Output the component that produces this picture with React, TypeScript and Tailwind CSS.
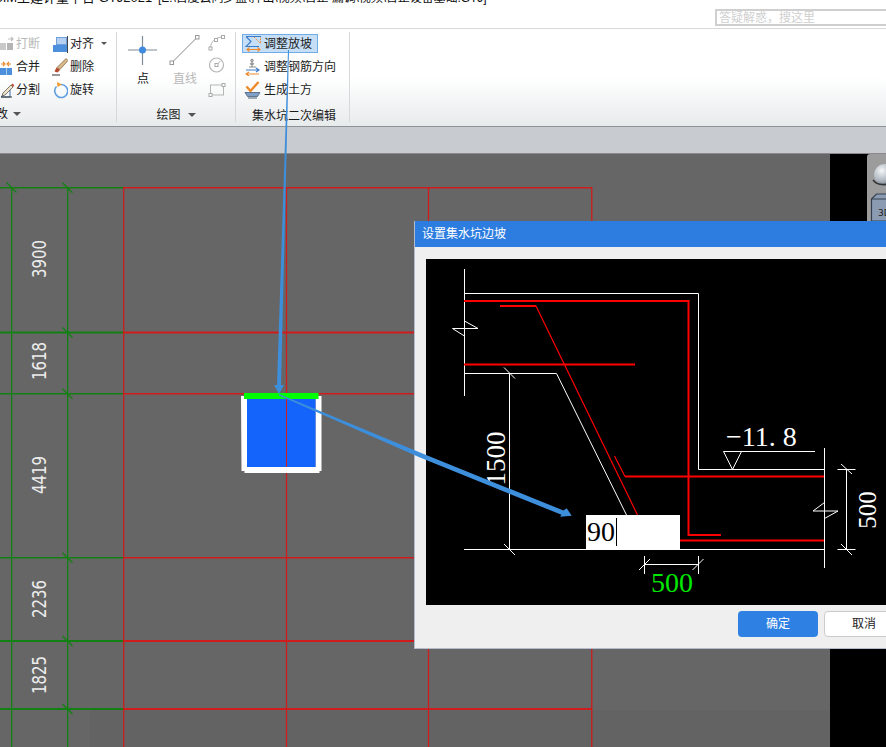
import type { ReactNode } from "react"

// ---- ribbon icons ----
function Icon({ children, w = 16 }: { children: ReactNode; w?: number }) {
  return (
    <svg width={w} height="18" viewBox={`0 0 ${w} 18`} className="shrink-0">
      {children}
    </svg>
  )
}

const BreakIcon = (
  <Icon>
    <rect x="2" y="8" width="6" height="7" fill="#c9c9c9" />
    <rect x="9" y="8" width="6" height="7" fill="#b5b5b5" />
    <path d="M10 4h5M13 2l2 2-2 2" stroke="#bdbdbd" strokeWidth="1.2" fill="none" />
  </Icon>
)
const AlignIcon = (
  <Icon>
    <rect x="4.500" y="2.500" width="10" height="7" fill="#b5d0f0" stroke="#6f9fd8" />
    <rect x="1" y="10" width="14" height="7" fill="#4c8fdd" />
    <path d="M15.500 1v17" stroke="#444" />
  </Icon>
)
const MergeIcon = (
  <Icon>
    <rect x="2" y="10" width="6" height="7" fill="#4c8fdd" />
    <rect x="8.500" y="10" width="5.500" height="7" fill="#4c8fdd" />
    <path d="M3 6h3M5 4l2 2-2 2M13 6h-3M11 4l-2 2 2 2" stroke="#e8892c" strokeWidth="1.2" fill="none" />
  </Icon>
)
const EraseIcon = (
  <Icon>
    <path d="M14 0.500l2 2-8 9-3-2z" fill="#d9b88a" stroke="#7a5a3a" strokeWidth=".7" />
    <path d="M4.500 9.500l3.500 2.500-2.500 2.500-3-1z" fill="#b5482a" />
    <path d="M0 17h8" stroke="#333" />
  </Icon>
)
const SplitIcon = (
  <Icon>
    <path d="M3 16l9-8v8z" fill="none" stroke="#3c6ea8" />
    <path d="M3 16h11" stroke="#333" />
    <path d="M5 12l8-8 2 2-8 8-3 1z" fill="#efe3c8" stroke="#5a5a5a" strokeWidth=".8" />
    <path d="M13 4l1.500-1.500 2 2L15 6z" fill="#c0503a" />
  </Icon>
)
const RotateIcon = (
  <Icon>
    <path d="M9 3.500a6.500 6.500 0 1 1-4.500 2" fill="none" stroke="#5f9fe0" strokeWidth="1.600" />
    <path d="M5 1l5 2.500L5.500 6z" fill="#ef9a2c" />
  </Icon>
)
const SlopeIcon = (
  <svg width="18" height="17" viewBox="0 0 18 17" className="shrink-0">
    <path d="M1 1.500h15M1 1.500l5 5-5 5h13" fill="none" stroke="#3b7cc9" strokeWidth="1.200" />
    <path d="M9 2l6.500 6.500V2" stroke="#ef8a2c" strokeDasharray="1.500 1" fill="none" />
    <path d="M2 14.500h13M4.500 12.500l-2.500 2 2.500 2M12.500 12.500l2.500 2-2.500 2" stroke="#ef8a2c" strokeWidth="1.100" fill="none" />
  </svg>
)
const RebarIcon = (
  <Icon w={18}>
    <path d="M8 1.500v7M6 5.500a3 3 0 0 0 4 0M5 9h7" stroke="#8a8a8a" fill="none" strokeWidth="1.100" />
    <circle cx="8" cy="2.500" r="1.300" fill="none" stroke="#8a8a8a" />
    <path d="M2 12h13M12 10l3 2-3 2" stroke="#3b7cc9" strokeWidth="1.100" fill="none" />
    <path d="M15 16H2M5 14l-3 2 3 2" stroke="#ef8a2c" strokeWidth="1.100" fill="none" />
  </Icon>
)
const EarthIcon = (
  <Icon w={18}>
    <path d="M2.500 5.500l4 4.500 8-9" stroke="#ef8a2c" strokeWidth="2.400" fill="none" />
    <path d="M1 11.500h15l-2.500 4h-10z" fill="#7f9fc6" stroke="#4a5f7c" strokeWidth=".8" />
    <path d="M4 17h9" stroke="#4a5f7c" />
  </Icon>
)

function RibbonItem({ icon, label, muted, arrow }: { icon: ReactNode; label: string; muted?: boolean; arrow?: boolean }) {
  return (
    <div className="flex h-[23px] items-center gap-[2px] whitespace-nowrap">
      {icon}
      <span className={muted ? "text-[#b9b9b9]" : "text-[#1c1c1c]"}>{label}</span>
      {arrow && <span className="ml-[5px] h-0 w-0 border-x-[3px] border-t-[3px] border-x-transparent border-t-[#555]" />}
    </div>
  )
}

function Divider() {
  return <div className="mt-[3px] h-[90px] w-px shrink-0 bg-[#d6d9da]" />
}

function Ribbon() {
  return (
    <div className="flex h-[98px] shrink-0 border-b border-b-[#8e9294] bg-gradient-to-b from-white from-50% to-[#e8ebec] text-[12px]">
      {/* clipped edit group */}
      <div className="flex w-[116px] shrink-0 flex-col pt-[3px]">
        <div className="-ml-[2px] grid h-[69px] grid-cols-[54px_60px]">
          <RibbonItem icon={BreakIcon} label="打断" muted />
          <RibbonItem icon={AlignIcon} label="对齐" arrow />
          <RibbonItem icon={MergeIcon} label="合并" />
          <RibbonItem icon={EraseIcon} label="删除" />
          <RibbonItem icon={SplitIcon} label="分割" />
          <RibbonItem icon={RotateIcon} label="旋转" />
        </div>
        <div className="mt-[3px] -ml-[16px] flex h-[20px] items-center gap-[5px] whitespace-nowrap text-[#1c1c1c]">
          修改
          <span className="h-0 w-0 border-x-[4px] border-t-[4px] border-x-transparent border-t-[#555]" />
        </div>
      </div>
      <Divider />

      {/* draw group */}
      <div className="flex w-[118px] shrink-0 flex-col pt-[3px]">
        <svg width="118" height="69" viewBox="117 32 118 69" className="block">
          <path d="M128 50h29M142.500 36v29" stroke="#7f8a94" strokeWidth="1.200" />
          <circle cx="142.500" cy="50" r="3.500" fill="#3f8be0" />
          <path d="M172 62.500L197 37.500" stroke="#8a8a8a" />
          <rect x="170" y="61" width="3.500" height="3.500" fill="#fff" stroke="#999" />
          <rect x="195.500" y="35.500" width="3.500" height="3.500" fill="#fff" stroke="#999" />
          <path d="M210.500 48c0-6 5-11 12-11" stroke="#b5b5b5" fill="none" />
          <rect x="209" y="47" width="3" height="3" fill="#fff" stroke="#aaa" />
          <rect x="214.500" y="38.500" width="3" height="3" fill="#fff" stroke="#aaa" />
          <rect x="221.500" y="35.500" width="3" height="3" fill="#fff" stroke="#aaa" />
          <circle cx="216.500" cy="65" r="7" fill="none" stroke="#b5b5b5" strokeWidth="1.200" />
          <path d="M216.500 65l4-4" stroke="#b5b5b5" />
          <rect x="215" y="63.500" width="3" height="3" fill="#fff" stroke="#aaa" />
          <rect x="210.500" y="85" width="13" height="10" fill="none" stroke="#b5b5b5" />
          <rect x="209" y="93.500" width="3" height="3" fill="#fff" stroke="#aaa" />
          <rect x="222" y="83.500" width="3" height="3" fill="#fff" stroke="#aaa" />
          <text x="143" y="83" textAnchor="middle" fontSize="12" fill="#111">点</text>
          <text x="185" y="83" textAnchor="middle" fontSize="12" fill="#b9b9b9">直线</text>
        </svg>
        <div className="mt-[4px] flex h-[20px] items-center justify-center gap-[7px] whitespace-nowrap text-[#1c1c1c]">
          绘图
          <span className="h-0 w-0 border-x-[4px] border-t-[4px] border-x-transparent border-t-[#555]" />
        </div>
      </div>
      <Divider />

      {/* sump group */}
      <div className="flex w-[113px] shrink-0 flex-col pt-[5px] pr-[3px] pl-[6px]">
        <div className="flex h-[19px] w-[76px] items-center gap-[1px] border border-[#70ace8] bg-[#c7dff6] pl-[2px] whitespace-nowrap text-[#1c1c1c]">
          {SlopeIcon}
          调整放坡
        </div>
        <div className="mt-[2px] pl-[2px]">
          <RibbonItem icon={RebarIcon} label="调整钢筋方向" />
          <RibbonItem icon={EarthIcon} label="生成土方" />
        </div>
        <div className="mt-[5px] flex h-[20px] items-center justify-center whitespace-nowrap text-[#1c1c1c]">集水坑二次编辑</div>
      </div>
      <Divider />
    </div>
  )
}

// ---- main canvas (grid lines in page coordinates) ----
const RED = "#d01c1c"
const GREEN = "#128012"
const rowLines = [
  { y: 187.750, w: 1.500 },
  { y: 332.500, w: 2 },
  { y: 393.750, w: 1.500 },
  { y: 557.750, w: 1.500 },
  { y: 641, w: 2 },
  { y: 709, w: 2 },
]
const spans = [
  { t: "3900", y: 259 },
  { t: "1618", y: 361 },
  { t: "4419", y: 475 },
  { t: "2236", y: 599 },
  { t: "1825", y: 675 },
]

function Grid() {
  return (
    <svg width="830" height="593" viewBox="0 154 830 593" className="block shrink-0">
      <rect x="90" y="710" width="740" height="37" fill="#636363" />
      {rowLines.map((r) => (
        <g key={r.y}>
          <path d={`M0 ${r.y}H123`} stroke={GREEN} strokeWidth={r.w} />
          <path d={`M123 ${r.y}H592`} stroke={RED} strokeWidth={r.w} />
        </g>
      ))}
      <path d="M11.650 187V747M67.650 187V747" stroke={GREEN} strokeWidth="1.300" />
      <path d="M123.750 187V747M286.500 187V747M428.500 187V747M591.750 187V747" stroke={RED} strokeWidth="1.250" />
      {rowLines.map((r) => (
        <path key={r.y} d={`M62.500 ${r.y - 5}l10 10`} stroke={GREEN} strokeWidth="1.250" />
      ))}
      <path d="M6.500 182.500l10 10" stroke={GREEN} strokeWidth="1.250" />
      {spans.map((s) => (
        <text
          key={s.t}
          transform={`translate(46 ${s.y}) rotate(-90) scale(1 1.35)`}
          textAnchor="middle"
          fontSize="15"
          fill="#ececec"
          className="font-['DejaVu_Sans',sans-serif]"
        >
          {s.t}
        </text>
      ))}

      {/* sump pit */}
      <path d="M241 396h6v71h68.500v-71h6v75h-2v2h-75v-2h-3z" fill="#fff" />
      <rect x="247" y="399" width="68.500" height="68" fill="#1464fb" />
      <path d="M286.500 399V467" stroke={RED} />
      <rect x="244" y="393" width="74.500" height="6" fill="#00ff00" />
    </svg>
  )
}

function SidePanel() {
  return (
    <div className="h-[80px] flex-1 overflow-hidden rounded-tl-[3px] bg-[#9c9c9c]">
      <svg width="19" height="70" viewBox="867 154 19 70" className="block">
        <defs>
          <radialGradient id="ball" cx="0.35" cy="0.3" r="0.8">
            <stop offset="0" stopColor="#f4f6f8" />
            <stop offset="0.6" stopColor="#aab2bc" />
            <stop offset="1" stopColor="#5c6670" />
          </radialGradient>
        </defs>
        <circle cx="885" cy="175" r="11" fill="url(#ball)" />
        <path d="M873 180c3 4 9 5 14 4" stroke="#333" strokeWidth="1.500" fill="none" />
        <path d="M871.500 221v-22l5-5h12v27z" fill="#8b9bb2" stroke="#34404e" strokeWidth="1.200" />
        <path d="M871.500 199h16" stroke="#34404e" />
        <text x="878" y="216" fontSize="9" fill="#222" className="font-['DejaVu_Sans',sans-serif]">3D</text>
      </svg>
    </div>
  )
}

// ---- dialog drawing ----
const whiteLines = [
  "M464.500 269V396",
  "M464.500 293.500H698.500V469.500H824.500",
  "M824.500 448V568",
  "M464.500 373.500H556.500L626.500 515",
  "M464 549.500H824.500",
  "M509.500 373.500V549.500",
  "M504 367.500l11 11M504 544l11 11",
  "M464.500 336l-12-7.500h25.500l-13.500-7.500",
  "M824.500 502.500l-11.500 8.500h25l-13.500 7.500",
  "M723.500 451.500l9 18 9-18M723.500 451.500H815",
  "M846.500 469.500V549.500M837.500 469.500H855.500M837.500 549.500H855.500",
  "M841 464l11 10M841 544l11 11",
  "M644.500 556V574M698.500 556V574M644.500 564.500H698.500",
  "M639 570l11-11M692.500 570l11-11",
]
const redLines = [
  { d: "M464 301H688.500V535H721", w: 2 },
  { d: "M500 306H536", w: 2 },
  { d: "M536 306L637.500 515", w: 1.200 },
  { d: "M464 364.500H635", w: 2 },
  { d: "M614.500 456L625 476.500", w: 1.200 },
  { d: "M625 476.500H824", w: 2 },
  { d: "M680 540.500H824", w: 2 },
]

function SlopeDrawing() {
  return (
    <svg width="470" height="346" viewBox="426 259 470 346" className="block">
      <rect x="426" y="259" width="470" height="346" fill="#000" />
      {whiteLines.map((d) => (
        <path key={d} d={d} stroke="#fff" fill="none" />
      ))}
      {redLines.map((l) => (
        <path key={l.d} d={l.d} stroke="#ff0000" strokeWidth={l.w} fill="none" />
      ))}
      <g fill="#fff" className="font-['Liberation_Serif',serif]">
        <text transform="translate(505 458.500) rotate(-90)" textAnchor="middle" fontSize="27">1500</text>
        <text transform="translate(876 510) rotate(-90)" textAnchor="middle" fontSize="25">500</text>
        <text x="726" y="445.500" fontSize="28">−11. 8</text>
      </g>
      <text x="672" y="592" textAnchor="middle" fontSize="28" fill="#00e800" className="font-['Liberation_Serif',serif]">
        500
      </text>
    </svg>
  )
}

function Dialog() {
  return (
    <div className="absolute top-[221px] left-[414px] flex h-[428px] w-[490px] flex-col border-b border-l border-[#b4bccc] bg-[#efefef]">
      <div className="flex h-[26px] items-center bg-[#2d7de0] pl-[7px] text-[12px] text-white">设置集水坑边坡</div>
      <div className="relative mt-[12px] ml-[11px]">
        <SlopeDrawing />
        {/* angle input */}
        <div className="absolute top-[256px] left-[160px] flex h-[34px] w-[94px] items-center bg-white pl-[1px] font-['Liberation_Serif',serif] text-[28px] text-black">
          90
          <span className="ml-[1px] h-[28px] w-px bg-black" />
        </div>
      </div>
      <div className="mt-[6px] flex gap-[6px] pl-[323px] text-[12px]">
        <div className="flex h-[26px] w-[80px] items-center justify-center rounded-[4px] bg-[#2f80e3] text-white">确定</div>
        <div className="flex h-[26px] w-[80px] items-center justify-center rounded-[4px] border border-[#cccccc] bg-white text-[#1c1c1c]">取消</div>
      </div>
    </div>
  )
}

// hand drawn callout arrows on top of the screenshot
function Arrows() {
  return (
    <svg width="886" height="747" viewBox="0 0 886 747" className="pointer-events-none absolute top-0 left-0">
      <path d="M288 50L289 50L281 385H284L279 394L274 385H277z" fill="#3d8fdc" />
      <path d="M279 394L420 452.500L563.500 510.500L566.700 508.300L571.700 515.700L560 516.700L561.500 514.800L420 457.500L279 395.500z" fill="#3d8fdc" />
    </svg>
  )
}

export default function App() {
  return (
    <div className="relative flex h-[747px] w-[886px] flex-col overflow-hidden bg-white font-['Liberation_Sans','Noto_Sans_CJK_SC',sans-serif]">
      {/* title bar, its text runs off the top of the shot */}
      <div className="h-[29px] shrink-0 border-b border-b-[#d9d9d9]">
        <div className="-mt-[11px] -ml-[6px] flex h-[18px] items-center whitespace-pre text-[#111]">
          <span className="w-[164px] text-[13px]">BIM土建计量平台 GTJ2021</span>
          <span className="text-[12px] tracking-[-0.08px]">[E:\百度云同步盘\押出\视频\台正 漏调\视频\台正设备基础.GTJ]</span>
        </div>
        <div className="mt-[2px] ml-[715px] flex h-[17px] items-center border-2 border-r-0 border-[#cfcfcf] pl-[2px] text-[12px] text-[#cfcfcf]">
          答疑解惑，搜这里
        </div>
      </div>
      <Ribbon />
      <div className="h-[27px] shrink-0 border-b border-b-[#8a8a8a] bg-[#c8cbcf]" />
      <div className="flex min-h-0 flex-1 bg-[#666666]">
        <Grid />
        <div className="flex flex-1 bg-black pl-[37px]">
          <SidePanel />
        </div>
      </div>
      <Dialog />
      <Arrows />
    </div>
  )
}
